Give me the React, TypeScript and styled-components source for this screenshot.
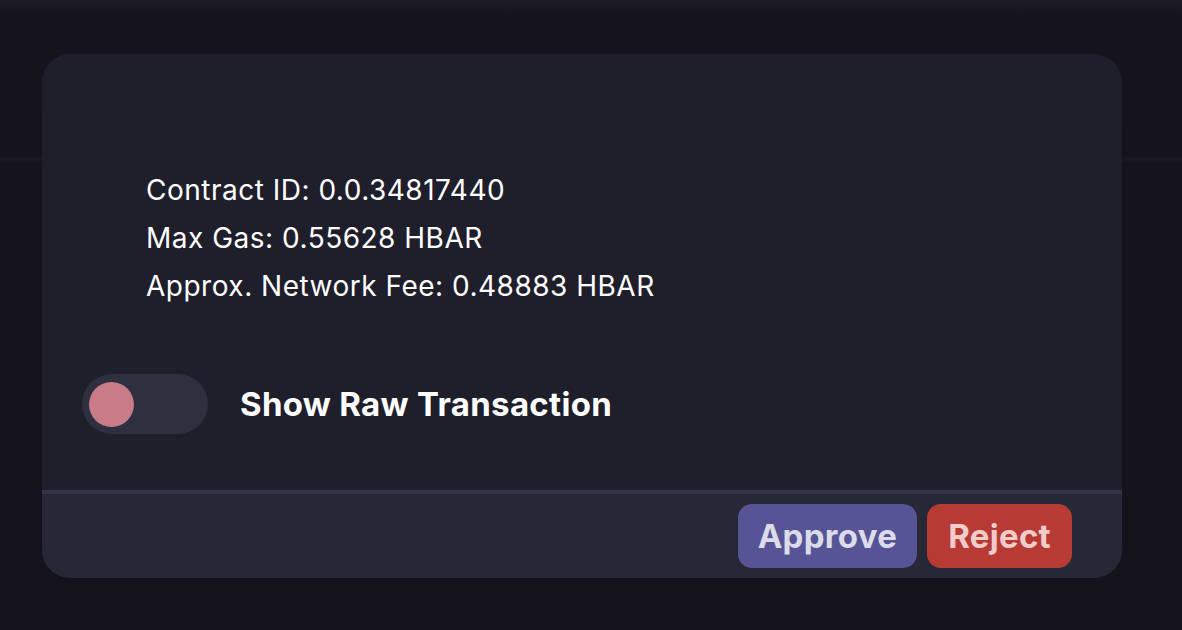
import { useState } from "react";
import styled, { createGlobalStyle } from "styled-components";

const GlobalStyle = createGlobalStyle`
  html, body {
    margin: 0;
    padding: 0;
  }
  body {
    width: 1182px;
    height: 630px;
    overflow: hidden;
    font-family: Inter, "Open Sans", "Liberation Sans", sans-serif;
    background:
      linear-gradient(180deg, #1d1d27 0px, #15141d 14px, #14131c 100%);
  }
`;

const Page = styled.div`
  position: relative;
  box-sizing: border-box;
  height: 630px;
  padding: 54px 60px 52px 42px;
`;

// faint band from the page header that sits behind the dialog
const HeaderEdge = styled.div`
  position: absolute;
  left: 0;
  right: 0;
  top: 155px;
  height: 8px;
  background: linear-gradient(180deg, #14131c, #191921 50%, #15141c);
`;

const Card = styled.section`
  position: relative;
  display: flex;
  flex-direction: column;
  width: 1080px;
  height: 524px;
  border-radius: 28px;
  overflow: hidden;
  background: #1f1e2b;
`;

const Body = styled.div`
  flex: 1;
  padding: 112px 0 0 40px;
`;

const Details = styled.div`
  padding-left: 64px;
  color: #ffffff;
  font-size: 28px;
  line-height: 48px;
  letter-spacing: 0.5px;
`;

const Line = styled.div``;

const ToggleRow = styled.label`
  display: flex;
  align-items: center;
  gap: 32px;
  margin-top: 64px;
  cursor: pointer;
`;

const Track = styled.span<{ $on: boolean }>`
  display: flex;
  align-items: center;
  justify-content: ${(p) => (p.$on ? "flex-end" : "flex-start")};
  box-sizing: border-box;
  width: 126px;
  height: 60px;
  padding: 0 7px;
  border-radius: 30px;
  background: #2e303f;
`;

const Knob = styled.span<{ $on: boolean }>`
  width: 45px;
  height: 45px;
  border-radius: 50%;
  background: ${(p) => (p.$on ? "#7fd08a" : "#c97b87")};
`;

const ToggleLabel = styled.span`
  color: #ffffff;
  font-size: 33px;
  font-weight: 700;
  letter-spacing: 0.3px;
`;

const Footer = styled.footer`
  display: flex;
  justify-content: flex-end;
  gap: 10px;
  height: 88px;
  box-sizing: border-box;
  padding: 10px 50px 10px 0;
  border-top: 4px solid #33334a;
  background: #262835;
`;

const Button = styled.button<{ $variant: "approve" | "reject" }>`
  height: 64px;
  padding: 0 ${(p) => (p.$variant === "approve" ? 20 : 21)}px;
  border: 0;
  border-radius: 14px;
  font-family: inherit;
  font-size: 33px;
  font-weight: 700;
  letter-spacing: 0.3px;
  cursor: pointer;
  background: ${(p) => (p.$variant === "approve" ? "#565495" : "#b73a34")};
  color: ${(p) => (p.$variant === "approve" ? "#dcdbea" : "#f2cccb")};
`;

export default function App() {
  const [raw, setRaw] = useState(false);

  return (
    <>
      <GlobalStyle />
      <Page>
        <HeaderEdge />
        <Card>
          <Body>
            <Details>
              <Line>Contract ID: 0.0.34817440</Line>
              <Line>Max Gas: 0.55628 HBAR</Line>
              <Line>Approx. Network Fee: 0.48883 HBAR</Line>
            </Details>
            <ToggleRow onClick={() => setRaw((v) => !v)}>
              <Track $on={raw}>
                <Knob $on={raw} />
              </Track>
              <ToggleLabel>Show Raw Transaction</ToggleLabel>
            </ToggleRow>
          </Body>
          <Footer>
            <Button $variant="approve">Approve</Button>
            <Button $variant="reject">Reject</Button>
          </Footer>
        </Card>
      </Page>
    </>
  );
}
